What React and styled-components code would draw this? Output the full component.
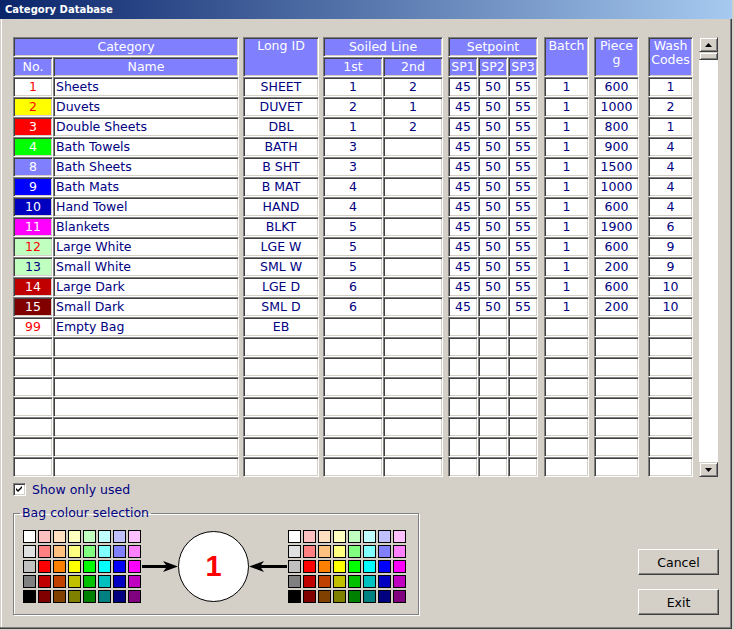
import React from 'react';
import styled, { createGlobalStyle } from 'styled-components';

const Global = createGlobalStyle`
  html, body { margin: 0; padding: 0; background: #d4d0c8; }
  body { font-family: "DejaVu Sans", Verdana, sans-serif; }
  * { box-sizing: border-box; }
`;

const NAVY = '#000080';
const FACE = '#d4d0c8';

const Window = styled.div`
  width: 732px;
  height: 629px;
  background: ${FACE};
  display: flex;
  flex-direction: column;
  box-shadow: inset -1px -1px #404040, inset -2px -2px #808080, inset 1px 0 ${FACE}, inset 2px 0 #fff;
  overflow: hidden;
`;

const TitleBar = styled.div`
  height: 19px;
  width: 734px;
  flex: none;
  background: linear-gradient(to right, #0a246a, #a6caf0);
  color: #fff;
  font-weight: bold;
  font-size: 10px;
  line-height: 19px;
  padding-left: 5px;
`;

const Body = styled.div`
  flex: 1;
  padding: 18px 0 0 13px;
  display: flex;
  flex-direction: column;
`;

const Grid = styled.div`
  display: flex;
  align-items: flex-start;
`;

const Group = styled.div`
  display: flex;
  flex-direction: column;
  margin-left: ${p => p.$gap || 0}px;
`;

const SubRow = styled.div`
  display: flex;
`;

const Column = styled.div`
  display: flex;
  flex-direction: column;
  width: ${p => p.$w}px;
`;

const Cell = styled.div`
  height: ${p => p.$h || 20}px;
  border: 1px solid;
  border-color: #808080 #fff #fff #808080;
  box-shadow: inset 1px 1px #404040, inset -1px -1px ${FACE};
  background: ${p => p.$bg || '#fff'};
  color: ${p => p.$fg || NAVY};
  font-size: 12.5px;
  line-height: 18px;
  text-align: ${p => p.$align || 'center'};
  padding: 0 ${p => (p.$align === 'left' ? 2 : 1)}px;
  white-space: nowrap;
  overflow: hidden;
`;

const HeadCell = styled(Cell)`
  background: #8080ff;
  color: #fff;
`;

const TallHead = styled(HeadCell)`
  height: 40px;
  line-height: 14px;
  padding-top: 1px;
  white-space: normal;
`;

const ScrollBar = styled.div`
  margin-left: 5px;
  width: 21px;
  height: 440px;
  display: flex;
  flex-direction: column;
  background: #fff;
  border-left: 1px solid ${FACE};
  border-right: 1px solid ${FACE};
`;

const ScrollBtn = styled.div`
  height: 15px;
  flex: none;
  background: ${FACE};
  border: 1px solid;
  border-color: ${FACE} #404040 #404040 ${FACE};
  box-shadow: inset 1px 1px #fff, inset -1px -1px #808080;
  display: flex;
  align-items: center;
  justify-content: center;
`;

const Thumb = styled(ScrollBtn)`
  height: 8px;
`;

const Track = styled.div`
  flex: 1;
  background: #fff;
`;

const Bottom = styled.div`
  width: 706px;
  display: flex;
  justify-content: space-between;
  align-items: flex-end;
`;

const LeftCol = styled.div`
  display: flex;
  flex-direction: column;
`;

const CheckRow = styled.label`
  margin-top: 6px;
  display: flex;
  align-items: center;
  gap: 6px;
  color: ${NAVY};
  font-size: 12.5px;
  line-height: 13px;
`;

const CheckBox = styled.span`
  width: 13px;
  height: 13px;
  background: #fff;
  border: 1px solid;
  border-color: #808080 #fff #fff #808080;
  box-shadow: inset 1px 1px #404040, inset -1px -1px ${FACE};
  display: flex;
  align-items: center;
  justify-content: center;
`;

const Frame = styled.fieldset`
  margin: 9px 0 0 0;
  width: 406px;
  padding: 0 0 11px 6px;
  border: 1px solid #808080;
  box-shadow: inset 1px 1px #fff, 1px 1px #fff;
  min-width: 0;
`;

const Legend = styled.legend`
  padding: 0 2px;
  color: ${NAVY};
  font-size: 12.5px;
  line-height: 16px;
`;

const FrameContent = styled.div`
  display: flex;
  align-items: center;
  padding: 9px 0 0 3px;
`;

const Palette = styled.div`
  display: grid;
  grid-template-columns: repeat(8, 13px);
  grid-auto-rows: 13px;
  gap: 2px;
`;

const Swatch = styled.div`
  border: 1px solid #000;
  background: ${p => p.$c};
`;

const Circle = styled.div`
  width: 71px;
  height: 71px;
  border-radius: 50%;
  border: 1px solid #000;
  background: #fff;
  display: flex;
  align-items: center;
  justify-content: center;
  color: #ff0000;
  font-family: "Liberation Sans", Arial, sans-serif;
  font-weight: bold;
  font-size: 29px;
`;

const RightCol = styled.div`
  display: flex;
  flex-direction: column;
  gap: 14px;
`;

const Button = styled.button`
  width: 81px;
  height: 26px;
  background: ${FACE};
  border: 1px solid;
  border-color: #fff #404040 #404040 #fff;
  box-shadow: inset -1px -1px #808080;
  font-family: "DejaVu Sans", Verdana, sans-serif;
  font-size: 12.5px;
  color: #000;
  padding: 0;
`;

const palette = [
  ['#ffffff', '#ffc0c0', '#ffe0c0', '#ffffc0', '#c0ffc0', '#c0ffff', '#c0c0ff', '#ffc0ff'],
  ['#e0e0e0', '#ff8080', '#ffc080', '#ffff80', '#80ff80', '#80ffff', '#8080ff', '#ff80ff'],
  ['#c0c0c0', '#ff0000', '#ff8000', '#ffff00', '#00ff00', '#00ffff', '#0000ff', '#ff00ff'],
  ['#808080', '#c00000', '#c04000', '#c0c000', '#00c000', '#00c0c0', '#0000c0', '#c000c0'],
  ['#000000', '#800000', '#804000', '#808000', '#008000', '#008080', '#000080', '#800080'],
];

const mk = (no, bg, fg, name, id, s1, s2, pieces, wash) => ({
  no, bg, fg, name, id, s1, s2,
  sp1: '45', sp2: '50', sp3: '55', batch: '1', pieces, wash,
});

const data = [
  mk('1', '#ffffff', '#ff0000', 'Sheets', 'SHEET', '1', '2', '600', '1'),
  mk('2', '#ffff00', '#ff0000', 'Duvets', 'DUVET', '2', '1', '1000', '2'),
  mk('3', '#ff0000', '#ffffff', 'Double Sheets', 'DBL', '1', '2', '800', '1'),
  mk('4', '#00ff00', '#ffffff', 'Bath Towels', 'BATH', '3', '', '900', '4'),
  mk('8', '#8080ff', '#ffffff', 'Bath Sheets', 'B SHT', '3', '', '1500', '4'),
  mk('9', '#0000ff', '#ffffff', 'Bath Mats', 'B MAT', '4', '', '1000', '4'),
  mk('10', '#0000c0', '#ffffff', 'Hand Towel', 'HAND', '4', '', '600', '4'),
  mk('11', '#ff00ff', '#ffffff', 'Blankets', 'BLKT', '5', '', '1900', '6'),
  mk('12', '#c0ffc0', '#ff0000', 'Large White', 'LGE W', '5', '', '600', '9'),
  mk('13', '#c0ffc0', NAVY, 'Small White', 'SML W', '5', '', '200', '9'),
  mk('14', '#c00000', '#ffffff', 'Large Dark', 'LGE D', '6', '', '600', '10'),
  mk('15', '#800000', '#ffffff', 'Small Dark', 'SML D', '6', '', '200', '10'),
  { no: '99', bg: '#ffffff', fg: '#ff0000', name: 'Empty Bag', id: 'EB' },
];

const ROWS = 20;
const rows = Array.from({ length: ROWS }, (_, i) => data[i] || {});

const groups = [
  { title: 'Category', gap: 0, cols: [
    { key: 'no', label: 'No.', w: 40, colored: true },
    { key: 'name', label: 'Name', w: 186, align: 'left' },
  ] },
  { label: ['Long ID'], gap: 4, cols: [{ key: 'id', w: 76 }] },
  { title: 'Soiled Line', gap: 4, cols: [
    { key: 's1', label: '1st', w: 60 },
    { key: 's2', label: '2nd', w: 60 },
  ] },
  { title: 'Setpoint', gap: 5, cols: [
    { key: 'sp1', label: 'SP1', w: 30 },
    { key: 'sp2', label: 'SP2', w: 30 },
    { key: 'sp3', label: 'SP3', w: 30 },
  ] },
  { label: ['Batch'], gap: 6, cols: [{ key: 'batch', w: 45 }] },
  { label: ['Piece', 'g'], gap: 5, cols: [{ key: 'pieces', w: 45 }] },
  { label: ['Wash', 'Codes'], gap: 9, cols: [{ key: 'wash', w: 45 }] },
];

const DataColumn = ({ col, withHead }) => (
  <Column $w={col.w}>
    {withHead && <HeadCell>{col.label}</HeadCell>}
    {rows.map((r, i) =>
      col.colored && r.no ? (
        <Cell key={i} $bg={r.bg} $fg={r.fg}>{r.no}</Cell>
      ) : (
        <Cell key={i} $align={col.align}>{r[col.key] || ''}</Cell>
      )
    )}
  </Column>
);

const Tri = ({ up }) => (
  <svg width="7" height="4" viewBox="0 0 7 4">
    <polygon points={up ? '3.5,0 7,4 0,4' : '0,0 7,0 3.5,4'} fill="#000" />
  </svg>
);

const Arrow = ({ w, dir }) => (
  <svg width={w} height="13" viewBox={`0 0 ${w} 13`}>
    <g transform={dir === 'left' ? `translate(${w},0) scale(-1,1)` : undefined}>
      <line x1="1" y1="6.5" x2={w - 8} y2="6.5" stroke="#000" strokeWidth="3" />
      <polygon points={`${w - 15},1 ${w},6.5 ${w - 15},12 ${w - 11},6.5`} fill="#000" />
    </g>
  </svg>
);

const PaletteGrid = () => (
  <Palette>
    {palette.flat().map((c, i) => <Swatch key={i} $c={c} />)}
  </Palette>
);

export default function App() {
  return (
    <>
      <Global />
      <Window>
        <TitleBar>Category Database</TitleBar>
        <Body>
          <Grid>
            {groups.map((g, gi) => (
              <Group key={gi} $gap={g.gap}>
                {g.title ? (
                  <>
                    <HeadCell>{g.title}</HeadCell>
                    <SubRow>
                      {g.cols.map(c => <DataColumn key={c.key} col={c} withHead />)}
                    </SubRow>
                  </>
                ) : (
                  <Column $w={g.cols[0].w}>
                    <TallHead>
                      {g.label.map((l, li) => <div key={li}>{l}</div>)}
                    </TallHead>
                    <DataColumn col={g.cols[0]} />
                  </Column>
                )}
              </Group>
            ))}
            <ScrollBar>
              <ScrollBtn><Tri up /></ScrollBtn>
              <Thumb />
              <Track />
              <ScrollBtn><Tri /></ScrollBtn>
            </ScrollBar>
          </Grid>
          <Bottom>
            <LeftCol>
              <CheckRow>
                <CheckBox>
                  <svg width="7" height="7" viewBox="0 0 7 7">
                    <path d="M0 2 L2 4 L6 0 L6 2 L2 6 L0 4 Z" fill="#000" />
                  </svg>
                </CheckBox>
                Show only used
              </CheckRow>
              <Frame>
                <Legend>Bag colour selection</Legend>
                <FrameContent>
                  <PaletteGrid />
                  <Arrow w={37} dir="right" />
                  <Circle>1</Circle>
                  <Arrow w={39} dir="left" />
                  <PaletteGrid />
                </FrameContent>
              </Frame>
            </LeftCol>
            <RightCol>
              <Button>Cancel</Button>
              <Button>Exit</Button>
            </RightCol>
          </Bottom>
        </Body>
      </Window>
    </>
  );
}
